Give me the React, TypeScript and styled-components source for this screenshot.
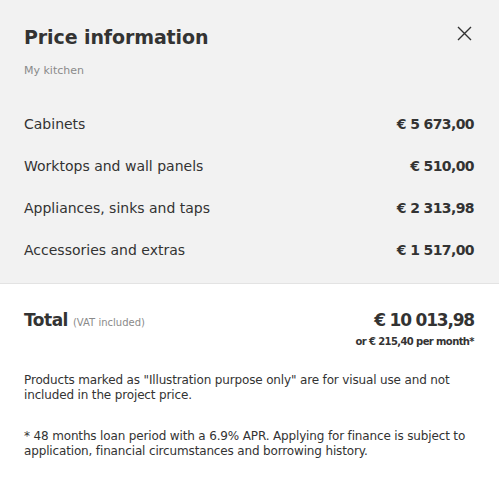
import React from "react"
import styled, { createGlobalStyle } from "styled-components"

const GlobalStyle = createGlobalStyle`
  html, body {
    margin: 0;
    padding: 0;
    background: #ffffff;
  }
  body {
    font-family: "DejaVu Sans", "Liberation Sans", sans-serif;
    color: #333333;
  }
`

const Panel = styled.div`
  width: 499px;
  height: 483px;
  display: flex;
  flex-direction: column;
  background: #ffffff;
`

const Summary = styled.section`
  background: #f2f2f2;
  padding: 24px 25px 12px 24px;
  border-bottom: 1px solid #e3e3e3;
`

const Header = styled.div`
  display: flex;
  justify-content: space-between;
  align-items: flex-start;
`

const Title = styled.h1`
  margin: 0;
  font-size: 19px;
  line-height: 26px;
  font-weight: 700;
  letter-spacing: -0.1px;
  color: #333333;
`

const CloseButton = styled.button`
  border: none;
  background: none;
  padding: 0;
  margin: 1px 2px 0 0;
  width: 16px;
  height: 16px;
  display: flex;
  align-items: center;
  justify-content: center;
  cursor: pointer;
  color: #333333;
`

const Subtitle = styled.div`
  margin-top: 14px;
  font-size: 11px;
  line-height: 14px;
  color: #8a8a8a;
`

const Lines = styled.ul`
  list-style: none;
  margin: 25px 0 0;
  padding: 0;
`

const Line = styled.li`
  display: flex;
  justify-content: space-between;
  align-items: center;
  height: 42px;
  font-size: 14px;
`

const Label = styled.span`
  color: #333333;
`

const Amount = styled.span`
  font-weight: 700;
  letter-spacing: -0.6px;
  color: #333333;
`

const Footer = styled.section`
  padding: 24px 25px 24px 24px;
`

const TotalRow = styled.div`
  display: flex;
  justify-content: space-between;
  align-items: flex-start;
`

const TotalLabel = styled.div`
  display: flex;
  align-items: baseline;
  gap: 5px;
`

const TotalWord = styled.span`
  font-size: 17px;
  font-weight: 700;
  letter-spacing: -0.5px;
  line-height: 24px;
`

const Vat = styled.span`
  font-size: 10px;
  color: #8a8a8a;
`

const TotalAmounts = styled.div`
  display: flex;
  flex-direction: column;
  align-items: flex-end;
`

const TotalPrice = styled.span`
  font-size: 17px;
  font-weight: 700;
  letter-spacing: -1.2px;
  line-height: 24px;
`

const Monthly = styled.span`
  margin-top: 4px;
  font-size: 10px;
  font-weight: 700;
  letter-spacing: -0.6px;
`

const Note = styled.p`
  margin: 26px 0 0;
  font-size: 12px;
  line-height: 15px;
  letter-spacing: -0.15px;
  color: #333333;
`

const items = [
  { label: "Cabinets", amount: "€ 5 673,00" },
  { label: "Worktops and wall panels", amount: "€ 510,00" },
  { label: "Appliances, sinks and taps", amount: "€ 2 313,98" },
  { label: "Accessories and extras", amount: "€ 1 517,00" },
]

export default function App() {
  return (
    <>
      <GlobalStyle />
      <Panel>
        <Summary>
          <Header>
            <Title>Price information</Title>
            <CloseButton aria-label="Close">
              <svg width="15" height="15" viewBox="0 0 15 15" fill="none">
                <path d="M1 1L14 14M14 1L1 14" stroke="currentColor" strokeWidth="1.4" />
              </svg>
            </CloseButton>
          </Header>
          <Subtitle>My kitchen</Subtitle>
          <Lines>
            {items.map((item) => (
              <Line key={item.label}>
                <Label>{item.label}</Label>
                <Amount>{item.amount}</Amount>
              </Line>
            ))}
          </Lines>
        </Summary>
        <Footer>
          <TotalRow>
            <TotalLabel>
              <TotalWord>Total</TotalWord>
              <Vat>(VAT included)</Vat>
            </TotalLabel>
            <TotalAmounts>
              <TotalPrice>€ 10 013,98</TotalPrice>
              <Monthly>or € 215,40 per month*</Monthly>
            </TotalAmounts>
          </TotalRow>
          <Note>
            Products marked as "Illustration purpose only" are for visual use and not included in the
            project price.
          </Note>
          <Note>
            * 48 months loan period with a 6.9% APR. Applying for finance is subject to application,
            financial circumstances and borrowing history.
          </Note>
        </Footer>
      </Panel>
    </>
  )
}
